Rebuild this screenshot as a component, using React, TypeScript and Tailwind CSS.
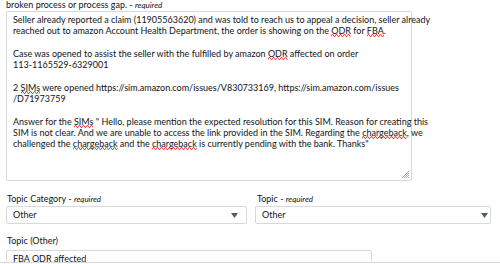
import React from 'react';

function Squiggle({ children }: { children: React.ReactNode }) {
  return (
    <span className="relative">
      {children}
      <svg className="absolute left-0 bottom-[-1px] w-full h-[3px] overflow-hidden" aria-hidden>
        <defs>
          <pattern id="spell" width="4" height="3" patternUnits="userSpaceOnUse">
            <path d="M0 2.5 L1 0.5 L2 0.5 L3 2.5 L4 2.5" fill="none" stroke="#e0393e" strokeWidth="0.9" />
          </pattern>
        </defs>
        <rect width="100%" height="3" fill="url(#spell)" />
      </svg>
    </span>
  );
}

function Caret() {
  return (
    <svg width="7" height="5" viewBox="0 0 7 5" className="shrink-0">
      <path d="M0 0 H7 L3.5 5 Z" fill="#545b64" />
    </svg>
  );
}

function SelectBox({ value, width, caretGap }: { value: string; width: string; caretGap: string }) {
  return (
    <div
      className={`${width} h-[18px] flex items-center justify-between border border-[#d5dbdb] rounded-[2px] pl-[6px] ${caretGap} bg-white`}
    >
      <span>{value}</span>
      <Caret />
    </div>
  );
}

export default function App() {
  return (
    <div className="relative w-[500px] h-[264px] overflow-hidden bg-white font-[Lato,sans-serif] text-[9px] text-[#111418]">
      {/* Description field */}
      <div className="pl-[6px] w-[412px]">
        <p className="leading-[11px] -mt-[1px]">
          broken process or process gap. - <i className="text-[8px]">required</i>
        </p>
        <div className="relative h-[170px] border border-[#d5dbdb] rounded-[2px] pl-[6px] pt-[2px] leading-[11.3px] whitespace-pre">
          <div>Seller already reported a claim (11905563620) and was told to reach us to appeal a decision, seller already</div>
          <div>
            reached out to amazon Account Health Department, the order is showing on the <Squiggle>ODR</Squiggle> for{' '}
            <Squiggle>FBA</Squiggle>.
          </div>
          <div>&nbsp;</div>
          <div>
            Case was opened to assist the seller with the fulfilled by amazon <Squiggle>ODR</Squiggle> affected on order
          </div>
          <div>113-1165529-6329001</div>
          <div>&nbsp;</div>
          <div>
            2 <Squiggle>SIMs</Squiggle> were opened https://sim.amazon.com/issues/V830733169, https://sim.amazon.com/issues
          </div>
          <div>/D71973759</div>
          <div>&nbsp;</div>
          <div>
            Answer for the <Squiggle>SIMs</Squiggle> " Hello, please mention the expected resolution for this SIM. Reason for
            creating this
          </div>
          <div>
            SIM is not clear. And we are unable to access the link provided in the SIM. Regarding the{' '}
            <Squiggle>chargeback</Squiggle>, we
          </div>
          <div>
            challenged the <Squiggle>chargeback</Squiggle> and the <Squiggle>chargeback</Squiggle> is currently pending with
            the bank. Thanks"
          </div>
          {/* resize grip */}
          <svg width="7" height="7" viewBox="0 0 7 7" className="absolute right-[2px] bottom-[2px]">
            <path d="M7 0 L0 7 M7 2 L2 7 M7 4 L4 7 M7 6 L6 7" stroke="#8d9696" strokeWidth="0.8" />
          </svg>
        </div>
      </div>

      {/* Topic selects */}
      <div className="flex gap-[8px] pl-[6px] mt-[12px]">
        <div>
          <p className="leading-[12px] pl-[1px]">
            Topic Category - <i className="text-[8px]">required</i>
          </p>
          <div className="mt-[1px]">
            <SelectBox value="Other" width="w-[241px]" caretGap="pr-[8px]" />
          </div>
        </div>
        <div>
          <p className="leading-[12px] pl-[2px]">
            Topic - <i className="text-[8px]">required</i>
          </p>
          <div className="mt-[1px]">
            <SelectBox value="Other" width="w-[236px]" caretGap="pr-[2px]" />
          </div>
        </div>
      </div>

      {/* Topic (Other) */}
      <div className="pl-[6px] mt-[11px]">
        <p className="leading-[12px] pl-[1px]">Topic (Other)</p>
        <div className="mt-[3px] w-[366px] h-[18px] border border-[#d5dbdb] rounded-[2px] pl-[6px] flex items-center">
          FBA ODR affected
        </div>
      </div>

      <div className="absolute left-0 right-0 top-[262px] h-[2px] border-t border-[#d5dbdb] bg-white" />
    </div>
  );
}
